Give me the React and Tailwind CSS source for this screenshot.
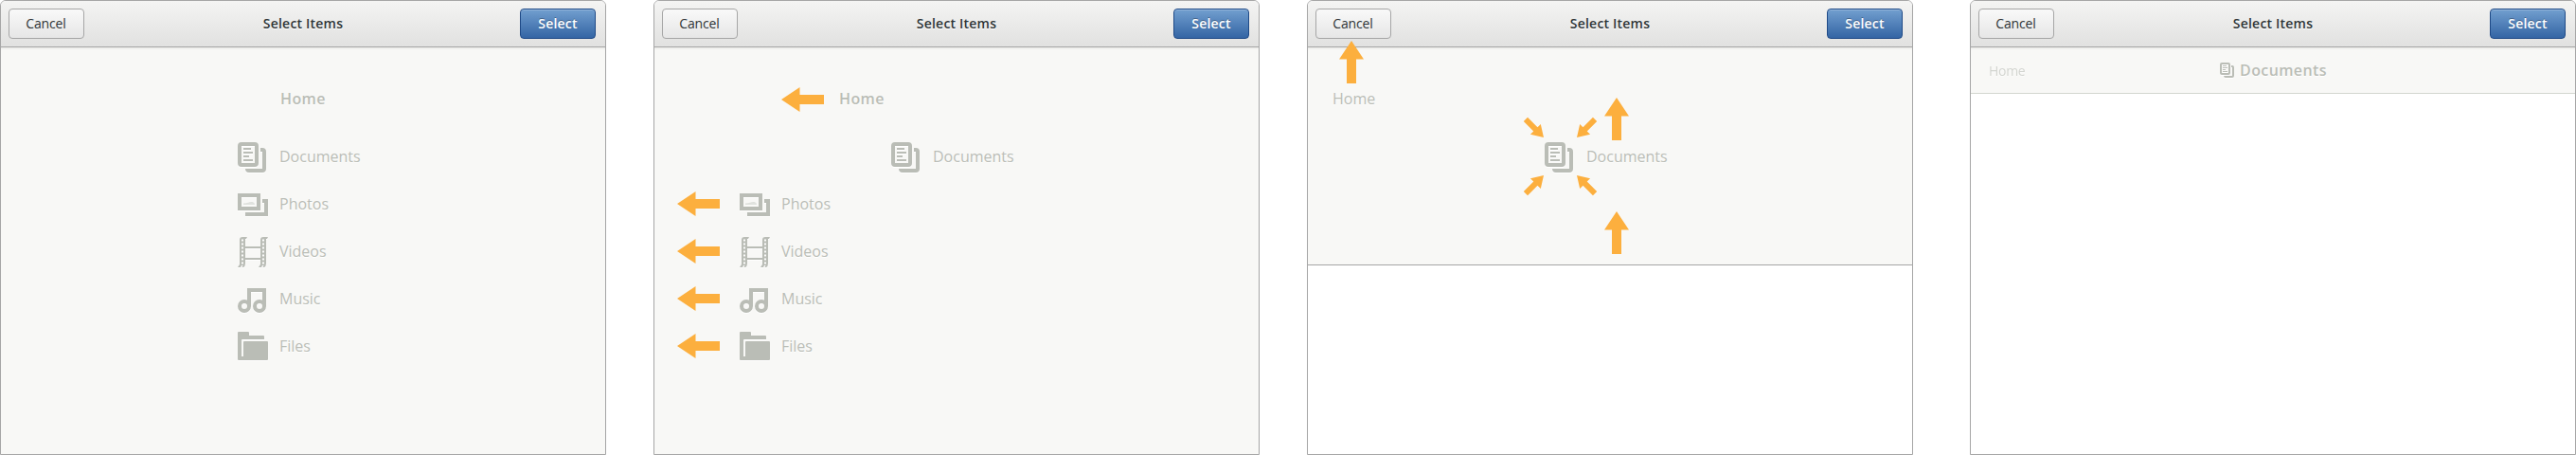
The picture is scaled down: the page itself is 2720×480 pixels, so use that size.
const ink = "#babdb6";

function DocumentsIcon({ className }) {
  return (
    <svg viewBox="0 0 32 32" className={className}>
      <path d="M26 6 A4 4 0 0 1 30 10 V28 A4 4 0 0 1 26 32 H12 A4 4 0 0 1 8 28 H26 V10 H24 V6Z" fill={ink} />
      <path
        fillRule="evenodd"
        d="M4 0 H18 A4 4 0 0 1 22 4 V22 A4 4 0 0 1 18 26 H4 A4 4 0 0 1 0 22 V4 A4 4 0 0 1 4 0Z M4 4 V22 H18 V4Z"
        fill={ink}
      />
      <path d="M6 7H14M6 11H16M6 15H12M6 19H16" stroke={ink} strokeWidth="2" />
    </svg>
  );
}

function PhotosIcon({ className }) {
  return (
    <svg viewBox="0 0 32 32" className={className}>
      <path fillRule="evenodd" d="M0 4H24V22H0Z M4 8V18H20V8Z" fill={ink} />
      <path d="M26 10H32V28H8V24H28V14H26Z" fill={ink} />
      <path d="M6 16V14.6Q9 14.6 11 13.8Q13 12.6 15.5 13Q18 13.4 18 16Z" fill={ink} opacity=".4" />
    </svg>
  );
}

function FilmStrip({ x }) {
  return (
    <path
      transform={`translate(${x} 0)`}
      fillRule="evenodd"
      fill={ink}
      d="M5 0H10L9 2H8V28Q8 31 6 32H4.5L5.5 30H4L3 32H0L2 29V3Q2 0 5 0Z M4 2.5V4.5H6V2.5Z M4 6.5V8.5H6V6.5Z M4 10.5V12.5H6V10.5Z M4 14.5V16.5H6V14.5Z M4 18.5V20.5H6V18.5Z M4 22.5V24.5H6V22.5Z M4 26.5V28.5H6V26.5Z"
    />
  );
}

function VideosIcon({ className }) {
  return (
    <svg viewBox="0 0 32 32" className={className}>
      <FilmStrip x={0} />
      <FilmStrip x={22} />
      <path d="M8 10H24V12H8ZM8 22H24V24H8Z" fill={ink} />
    </svg>
  );
}

function MusicIcon({ className }) {
  return (
    <svg viewBox="0 0 32 32" className={className}>
      <circle cx="7" cy="23" r="5" fill="none" stroke={ink} strokeWidth="4" />
      <circle cx="23" cy="23" r="5" fill="none" stroke={ink} strokeWidth="4" />
      <path d="M10 4H30V23H26V8H14V23H10Z" fill={ink} />
    </svg>
  );
}

function FilesIcon({ className }) {
  return (
    <svg viewBox="0 0 32 32" className={className}>
      <path d="M1 0H11Q12 0 12 1V4H27Q28 4 28 5V8H5Q4 8 4 9V26H6V11Q6 10 7 10H31Q32 10 32 11V29Q32 30 31 30H1Q0 30 0 29V1Q0 0 1 0Z" fill={ink} />
    </svg>
  );
}

function ArrowLeft() {
  return (
    <svg viewBox="0 0 45 26" className="h-[26px] w-[45px] shrink-0">
      <path d="M0 13L19.5 0V8H45V18H19.5V26Z" fill="#fcaf3e" />
    </svg>
  );
}

function ArrowUp({ className }) {
  return (
    <svg viewBox="0 0 26 45" className={`absolute h-[45px] w-[26px] ${className}`}>
      <path d="M13 0L26 19.5H18V45H8V19.5H0Z" fill="#fcaf3e" />
    </svg>
  );
}

function ConvergingArrows({ className }) {
  const tips = [
    [22, 22, 45],
    [57, 22, 135],
    [22, 62, -45],
    [57, 62, -135],
  ];
  return (
    <svg viewBox="0 0 79 84" className={`absolute h-[84px] w-[79px] ${className}`}>
      {tips.map(([x, y, angle]) => (
        <path
          key={angle}
          transform={`translate(${x} ${y}) rotate(${angle})`}
          d="M0 0L-12.2 -7.7V-3H-27V3H-12.2V7.7Z"
          fill="#fcaf3e"
        />
      ))}
    </svg>
  );
}

function Label({ children, className = "" }) {
  return (
    <span className={`whitespace-nowrap text-[16px] leading-6 text-[#babdb6] [text-shadow:0_1px_0_#fff] ${className}`}>
      {children}
    </span>
  );
}

function Item({ icon: Icon, label, arrow, className = "" }) {
  return (
    <li className={`flex h-[50px] items-center ${className}`}>
      {arrow && (
        <span className="mr-[21px] pb-[2px]">
          <ArrowLeft />
        </span>
      )}
      <Icon className="mr-3 h-8 w-8 shrink-0 drop-shadow-[0_1px_0_#fff]" />
      <Label className="pb-[2px]">{label}</Label>
    </li>
  );
}

function Window({ children, className = "" }) {
  return (
    <section
      className={`relative flex h-[480px] w-[640px] shrink-0 flex-col overflow-hidden rounded-t-[6px] border border-[#a6a6a6] bg-white ${className}`}
    >
      <header className="flex h-[49px] shrink-0 items-center justify-between border-b border-[#a6a6a6] bg-linear-to-b from-[#f4f4f3] to-[#e1e1e0] pr-[10px] pl-2 text-[14px] leading-5 text-[#2e3436]">
        <button className="h-8 w-20 rounded-[4px] border border-[#a6a6a6] bg-linear-to-b from-[#f9f9f9] to-[#e6e6e6] pr-px pb-px tracking-[-0.15px]">
          Cancel
        </button>
        <h1 className="pl-[2px] font-semibold tracking-[0.2px] [text-shadow:0_1px_0_#fff]">Select Items</h1>
        <button className="h-8 w-20 rounded-[4px] border border-[#1f4a87] bg-linear-to-b from-[#729fcf] to-[#3465a4] pb-px font-semibold tracking-[0.2px] text-white shadow-[inset_0_1px_0_rgba(255,255,255,0.25)] [text-shadow:0_-1px_0_rgba(0,0,0,0.3)]">
          Select
        </button>
      </header>
      {children}
    </section>
  );
}

const body = "bg-[#f8f8f6] shadow-[inset_0_3px_3px_-2px_rgba(0,0,0,0.08)]";

export default function App() {
  return (
    <main className="flex h-[480px] w-[2720px] bg-white font-['Open_Sans',sans-serif]">
      <Window className="mr-[50px]">
        <div className={`flex-1 pt-[42px] pl-[250px] ${body}`}>
          <Label className="block pl-[45px] font-semibold tracking-[0.4px]">Home</Label>
          <ul className="mt-[25px]">
            <Item icon={DocumentsIcon} label="Documents" />
            <Item icon={PhotosIcon} label="Photos" />
            <Item icon={VideosIcon} label="Videos" />
            <Item icon={MusicIcon} label="Music" />
            <Item icon={FilesIcon} label="Files" />
          </ul>
        </div>
      </Window>

      <Window className="mr-[50px]">
        <div className={`flex-1 pt-[42px] ${body}`}>
          <div className="flex h-6 items-center gap-4 pl-[134px]">
            <span className="pt-[2px]">
              <ArrowLeft />
            </span>
            <Label className="font-semibold tracking-[0.4px]">Home</Label>
          </div>
          <ul className="mt-[25px]">
            <Item icon={DocumentsIcon} label="Documents" className="pl-[250px]" />
            <Item icon={PhotosIcon} label="Photos" arrow className="pl-6" />
            <Item icon={VideosIcon} label="Videos" arrow className="pl-6" />
            <Item icon={MusicIcon} label="Music" arrow className="pl-6" />
            <Item icon={FilesIcon} label="Files" arrow className="pl-6" />
          </ul>
        </div>
      </Window>

      <Window className="mr-[60px]">
        <div className={`h-[230px] border-b border-[#a6a6a6] pt-[42px] ${body}`}>
          <Label className="block pl-[26px]">Home</Label>
          <ul className="mt-[25px]">
            <Item icon={DocumentsIcon} label="Documents" className="pl-[250px]" />
          </ul>
        </div>
        <ArrowUp className="top-[42px] left-[33px]" />
        <ArrowUp className="top-[102px] left-[313px]" />
        <ArrowUp className="top-[222px] left-[313px]" />
        <ConvergingArrows className="top-[122px] left-[227px]" />
      </Window>

      <Window>
        <div className={`flex h-[49px] items-center border-b border-[#d3d7cf] pl-[19px] ${body}`}>
          <Label className="w-[244px] pt-px text-[14px]! tracking-[-0.3px] opacity-60">Home</Label>
          <DocumentsIcon className="mr-[5px] h-4 w-4 drop-shadow-[0_1px_0_#fff]" />
          <Label className="font-semibold tracking-[0.4px]">Documents</Label>
        </div>
      </Window>
    </main>
  );
}
